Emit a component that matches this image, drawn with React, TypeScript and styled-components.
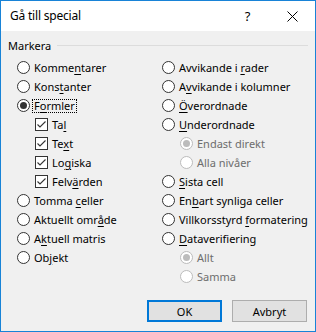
import React from "react";
import styled, { createGlobalStyle, css } from "styled-components";

const Global = createGlobalStyle`
  html, body { margin: 0; padding: 0; background: #f0f0f0; overflow: hidden; }
  body { font-family: "Noto Sans", "Open Sans", sans-serif; }
`;

const Window = styled.div`
  width: 316px;
  height: 332px;
  box-sizing: border-box;
  border: 1px solid #1883d7;
  background: #f0f0f0;
  display: flex;
  flex-direction: column;
  color: #000;
`;

const TitleBar = styled.div`
  height: 30px;
  background: #fff;
  display: flex;
  align-items: center;
  padding-left: 9px;
`;

const Title = styled.div`
  flex: 1;
  font-size: 12px;
  letter-spacing: -0.2px;
  line-height: 16px;
`;

const TitleBtn = styled.div`
  width: 45px;
  height: 30px;
  display: flex;
  align-items: center;
  justify-content: center;
  font-size: 13px;
  font-family: "Noto Sans", sans-serif;
`;

const Body = styled.div`
  flex: 1;
  padding: 7px 8px 9px 7px;
  display: flex;
  flex-direction: column;
`;

const GroupHeader = styled.div`
  display: flex;
  align-items: center;
  height: 14px;
  font-size: 11px;
`;

const Rule = styled.div`
  flex: 1;
  height: 1px;
  background: #dcdcdc;
  margin-left: 6px;
  margin-right: -1px;
`;

const Columns = styled.div`
  margin-top: 6px;
  display: grid;
  grid-template-columns: 145px 1fr;
  padding-left: 9px;
`;

const Column = styled.div`
  display: flex;
  flex-direction: column;
`;

const Row = styled.div<{ $indent?: boolean; $disabled?: boolean }>`
  height: 19px;
  display: flex;
  align-items: center;
  gap: 4px;
  padding-left: ${(p) => (p.$indent ? 18 : 0)}px;
  font-size: 11px;
  white-space: nowrap;
  color: ${(p) => (p.$disabled ? "#6d6d6d" : "#000")};
  u { text-underline-offset: 2px; }
`;

const RadioCircle = styled.span<{ $checked?: boolean; $disabled?: boolean }>`
  width: 13px;
  height: 13px;
  box-sizing: border-box;
  border-radius: 50%;
  border: 1px solid ${(p) => (p.$disabled ? "#bcbcbc" : "#333")};
  background: #fff;
  display: flex;
  align-items: center;
  justify-content: center;
  flex-shrink: 0;
  ${(p) =>
    p.$checked &&
    css`
      &::after {
        content: "";
        width: 7px;
        height: 7px;
        border-radius: 50%;
        background: ${p.$disabled ? "#bcbcbc" : "#333"};
      }
    `}
`;

const CheckBox = styled.span`
  width: 13px;
  height: 13px;
  box-sizing: border-box;
  border: 1px solid #333;
  background: #fff;
  display: flex;
  flex-shrink: 0;
`;

const Focus = styled.span`
  border: 1px dotted #000;
  padding: 0 1px;
  margin-left: -2px;
  line-height: 12px;
`;

const ButtonRow = styled.div`
  margin-top: auto;
  display: flex;
  justify-content: flex-end;
  gap: 10px;
`;

const Button = styled.div<{ $default?: boolean }>`
  width: 75px;
  height: 22px;
  box-sizing: border-box;
  background: #e1e1e1;
  border: ${(p) => (p.$default ? "2px solid #0078d7" : "1px solid #adadad")};
  display: flex;
  align-items: center;
  justify-content: center;
  font-size: 11px;
`;

type Item = {
  label: React.ReactNode;
  kind?: "radio" | "check";
  checked?: boolean;
  disabled?: boolean;
  indent?: boolean;
  focus?: boolean;
};

const Check = () => (
  <svg width="11" height="11" viewBox="0 0 11 11">
    <path d="M1.5 5.5 L4 8 L9.5 2.5" fill="none" stroke="#333" strokeWidth="1.1" />
  </svg>
);

const Option = ({ it }: { it: Item }) => (
  <Row $indent={it.indent} $disabled={it.disabled}>
    {it.kind === "check" ? (
      <CheckBox>{it.checked && <Check />}</CheckBox>
    ) : (
      <RadioCircle $checked={it.checked} $disabled={it.disabled} />
    )}
    {it.focus ? <Focus>{it.label}</Focus> : <span>{it.label}</span>}
  </Row>
);

const left: Item[] = [
  { label: <>Komme<u>n</u>tarer</> },
  { label: <>Kons<u>t</u>anter</> },
  { label: <>F<u>o</u>rmler</>, checked: true, focus: true },
  { label: <>Ta<u>l</u></>, kind: "check", checked: true, indent: true },
  { label: <>Te<u>x</u>t</>, kind: "check", checked: true, indent: true },
  { label: <>Lo<u>g</u>iska</>, kind: "check", checked: true, indent: true },
  { label: <>Felv<u>ä</u>rden</>, kind: "check", checked: true, indent: true },
  { label: <>Tomma <u>c</u>eller</> },
  { label: <>Aktuellt omr<u>å</u>de</> },
  { label: <>A<u>k</u>tuell matris</> },
  { label: <>Ob<u>j</u>ekt</> },
];

const right: Item[] = [
  { label: <>Avvikande i <u>r</u>ader</> },
  { label: <>A<u>v</u>vikande i kolumner</> },
  { label: <><u>Ö</u>verordnade</> },
  { label: <><u>U</u>nderordnade</> },
  { label: "Endast direkt", indent: true, disabled: true, checked: true },
  { label: "Alla nivåer", indent: true, disabled: true },
  { label: <><u>S</u>ista cell</> },
  { label: <>En<u>b</u>art synliga celler</> },
  { label: <>Villkorsstyrd <u>f</u>ormatering</> },
  { label: <><u>D</u>ataverifiering</> },
  { label: "Allt", indent: true, disabled: true, checked: true },
  { label: "Samma", indent: true, disabled: true },
];

export default function App() {
  return (
    <>
      <Global />
      <Window>
        <TitleBar>
          <Title>Gå till special</Title>
          <TitleBtn>?</TitleBtn>
          <TitleBtn>
            <svg width="11" height="11" viewBox="0 0 11 11">
              <path d="M0.5 0.5 L10.5 10.5 M10.5 0.5 L0.5 10.5" stroke="#000" strokeWidth="1" />
            </svg>
          </TitleBtn>
        </TitleBar>
        <Body>
          <GroupHeader>
            <span>Markera</span>
            <Rule />
          </GroupHeader>
          <Columns>
            <Column>
              {left.map((it, i) => (
                <Option key={i} it={it} />
              ))}
            </Column>
            <Column>
              {right.map((it, i) => (
                <Option key={i} it={it} />
              ))}
            </Column>
          </Columns>
          <ButtonRow>
            <Button $default>OK</Button>
            <Button>Avbryt</Button>
          </ButtonRow>
        </Body>
      </Window>
    </>
  );
}
